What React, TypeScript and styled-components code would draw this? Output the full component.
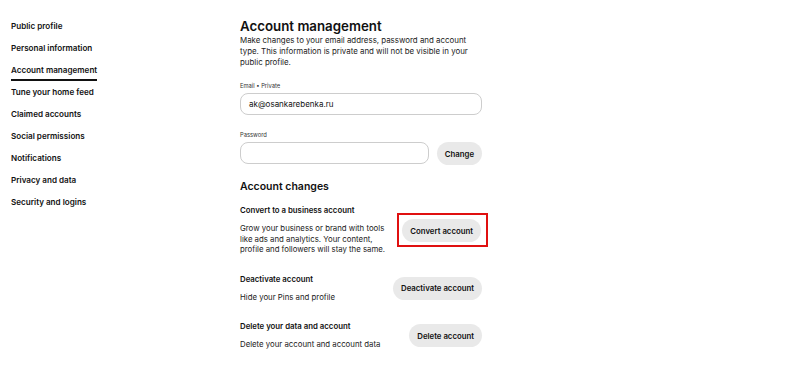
import React from 'react'
import styled, { createGlobalStyle } from 'styled-components'

const GlobalStyle = createGlobalStyle`
  body {
    margin: 0;
    background: #ffffff;
    font-family: Inter, "Liberation Sans", Arial, sans-serif;
    color: #111111;
  }
`;

const PageStyled = styled.div`
  display: flex;
  padding: 17px 0 0 11px;
  height: 368px;
`;

const SideBarStyled = styled.nav`
  width: 229px;
  padding-top: 3px;
  display: flex;
  flex-direction: column;
  align-items: flex-start;
`;

const NavItemStyled = styled.a<{ $active?: boolean }>`
  display: block;
  font-size: 8.1px;
  font-weight: 600;
  color: #111;
  text-decoration: none;
  height: 22px;
  line-height: 12px;
  box-sizing: border-box;
  position: relative;
  &::after {
    content: '';
    display: ${({ $active }) => ($active ? 'block' : 'none')};
    position: absolute;
    left: 0;
    right: 0;
    top: 15px;
    height: 2px;
    background: #111;
  }
`;

const MainStyled = styled.main`
  width: 242px;
  display: flex;
  flex-direction: column;
`;

const TitleStyled = styled.h1`
  margin: 0;
  font-size: 13.3px;
  font-weight: 600;
  line-height: 18px;
`;

const IntroStyled = styled.p`
  margin: 0 0 15px;
  font-size: 7.9px;
  line-height: 10.8px;
  color: #222;
`;

const LabelStyled = styled.label`
  display: block;
  font-size: 5.8px;
  color: #333;
  margin-bottom: 4px;
`;

const FieldRowStyled = styled.div`
  display: flex;
  gap: 8px;
  margin-bottom: 16px;
`;

const InputStyled = styled.div`
  flex: 1;
  height: 22px;
  box-sizing: border-box;
  border: 1px solid #cdcdcd;
  border-radius: 8px;
  padding: 0 8px;
  display: flex;
  align-items: center;
  font-size: 8px;
  color: #111;
`;

const ButtonStyled = styled.button`
  background: #e9e9e9;
  border: none;
  border-radius: 12px;
  height: 23px;
  padding: 0 8px;
  font-family: inherit;
  font-size: 7.8px;
  font-weight: 600;
  color: #111;
  white-space: nowrap;
`;

const HighlightStyled = styled.div`
  border: 2px solid #e01010;
  padding: 4px 5px 3px 3px;
  margin-right: -6px;
  display: flex;
`;

const SectionTitleStyled = styled.h2`
  margin: 0 0 12px;
  font-size: 10.5px;
  font-weight: 600;
  line-height: 12px;
`;

const ChangeRowStyled = styled.div`
  display: flex;
  align-items: center;
  justify-content: space-between;
  margin-bottom: 19px;
`;

const ChangeTextStyled = styled.div<{ $width?: number }>`
  max-width: ${({ $width }) => $width ?? 200}px;
`;

const ChangeTitleStyled = styled.div`
  font-size: 7.8px;
  font-weight: 600;
  line-height: 10px;
  margin-bottom: 8px;
`;

const ChangeDescStyled = styled.div`
  font-size: 7.8px;
  line-height: 10.5px;
  color: #222;
`;

const navItems = [
  'Public profile',
  'Personal information',
  'Account management',
  'Tune your home feed',
  'Claimed accounts',
  'Social permissions',
  'Notifications',
  'Privacy and data',
  'Security and logins',
]

export default function App() {
  return (
    <>
      <GlobalStyle />
      <PageStyled>
        <SideBarStyled>
          {navItems.map((item) => (
            <NavItemStyled key={item} $active={item === 'Account management'}>
              {item}
            </NavItemStyled>
          ))}
        </SideBarStyled>
        <MainStyled>
          <TitleStyled>Account management</TitleStyled>
          <IntroStyled>
            Make changes to your email address, password and account type. This
            information is private and will not be visible in your public profile.
          </IntroStyled>

          <LabelStyled>Email • Private</LabelStyled>
          <FieldRowStyled>
            <InputStyled>ak@osankarebenka.ru</InputStyled>
          </FieldRowStyled>

          <LabelStyled>Password</LabelStyled>
          <FieldRowStyled>
            <InputStyled />
            <ButtonStyled>Change</ButtonStyled>
          </FieldRowStyled>

          <SectionTitleStyled>Account changes</SectionTitleStyled>

          <ChangeRowStyled>
            <ChangeTextStyled $width={152}>
              <ChangeTitleStyled>Convert to a business account</ChangeTitleStyled>
              <ChangeDescStyled>
                Grow your business or brand with tools like ads and analytics. Your
                content, profile and followers will stay the same.
              </ChangeDescStyled>
            </ChangeTextStyled>
            <HighlightStyled>
              <ButtonStyled>Convert account</ButtonStyled>
            </HighlightStyled>
          </ChangeRowStyled>

          <ChangeRowStyled>
            <ChangeTextStyled>
              <ChangeTitleStyled>Deactivate account</ChangeTitleStyled>
              <ChangeDescStyled>Hide your Pins and profile</ChangeDescStyled>
            </ChangeTextStyled>
            <ButtonStyled>Deactivate account</ButtonStyled>
          </ChangeRowStyled>

          <ChangeRowStyled>
            <ChangeTextStyled>
              <ChangeTitleStyled>Delete your data and account</ChangeTitleStyled>
              <ChangeDescStyled>Delete your account and account data</ChangeDescStyled>
            </ChangeTextStyled>
            <ButtonStyled>Delete account</ButtonStyled>
          </ChangeRowStyled>
        </MainStyled>
      </PageStyled>
    </>
  )
}
